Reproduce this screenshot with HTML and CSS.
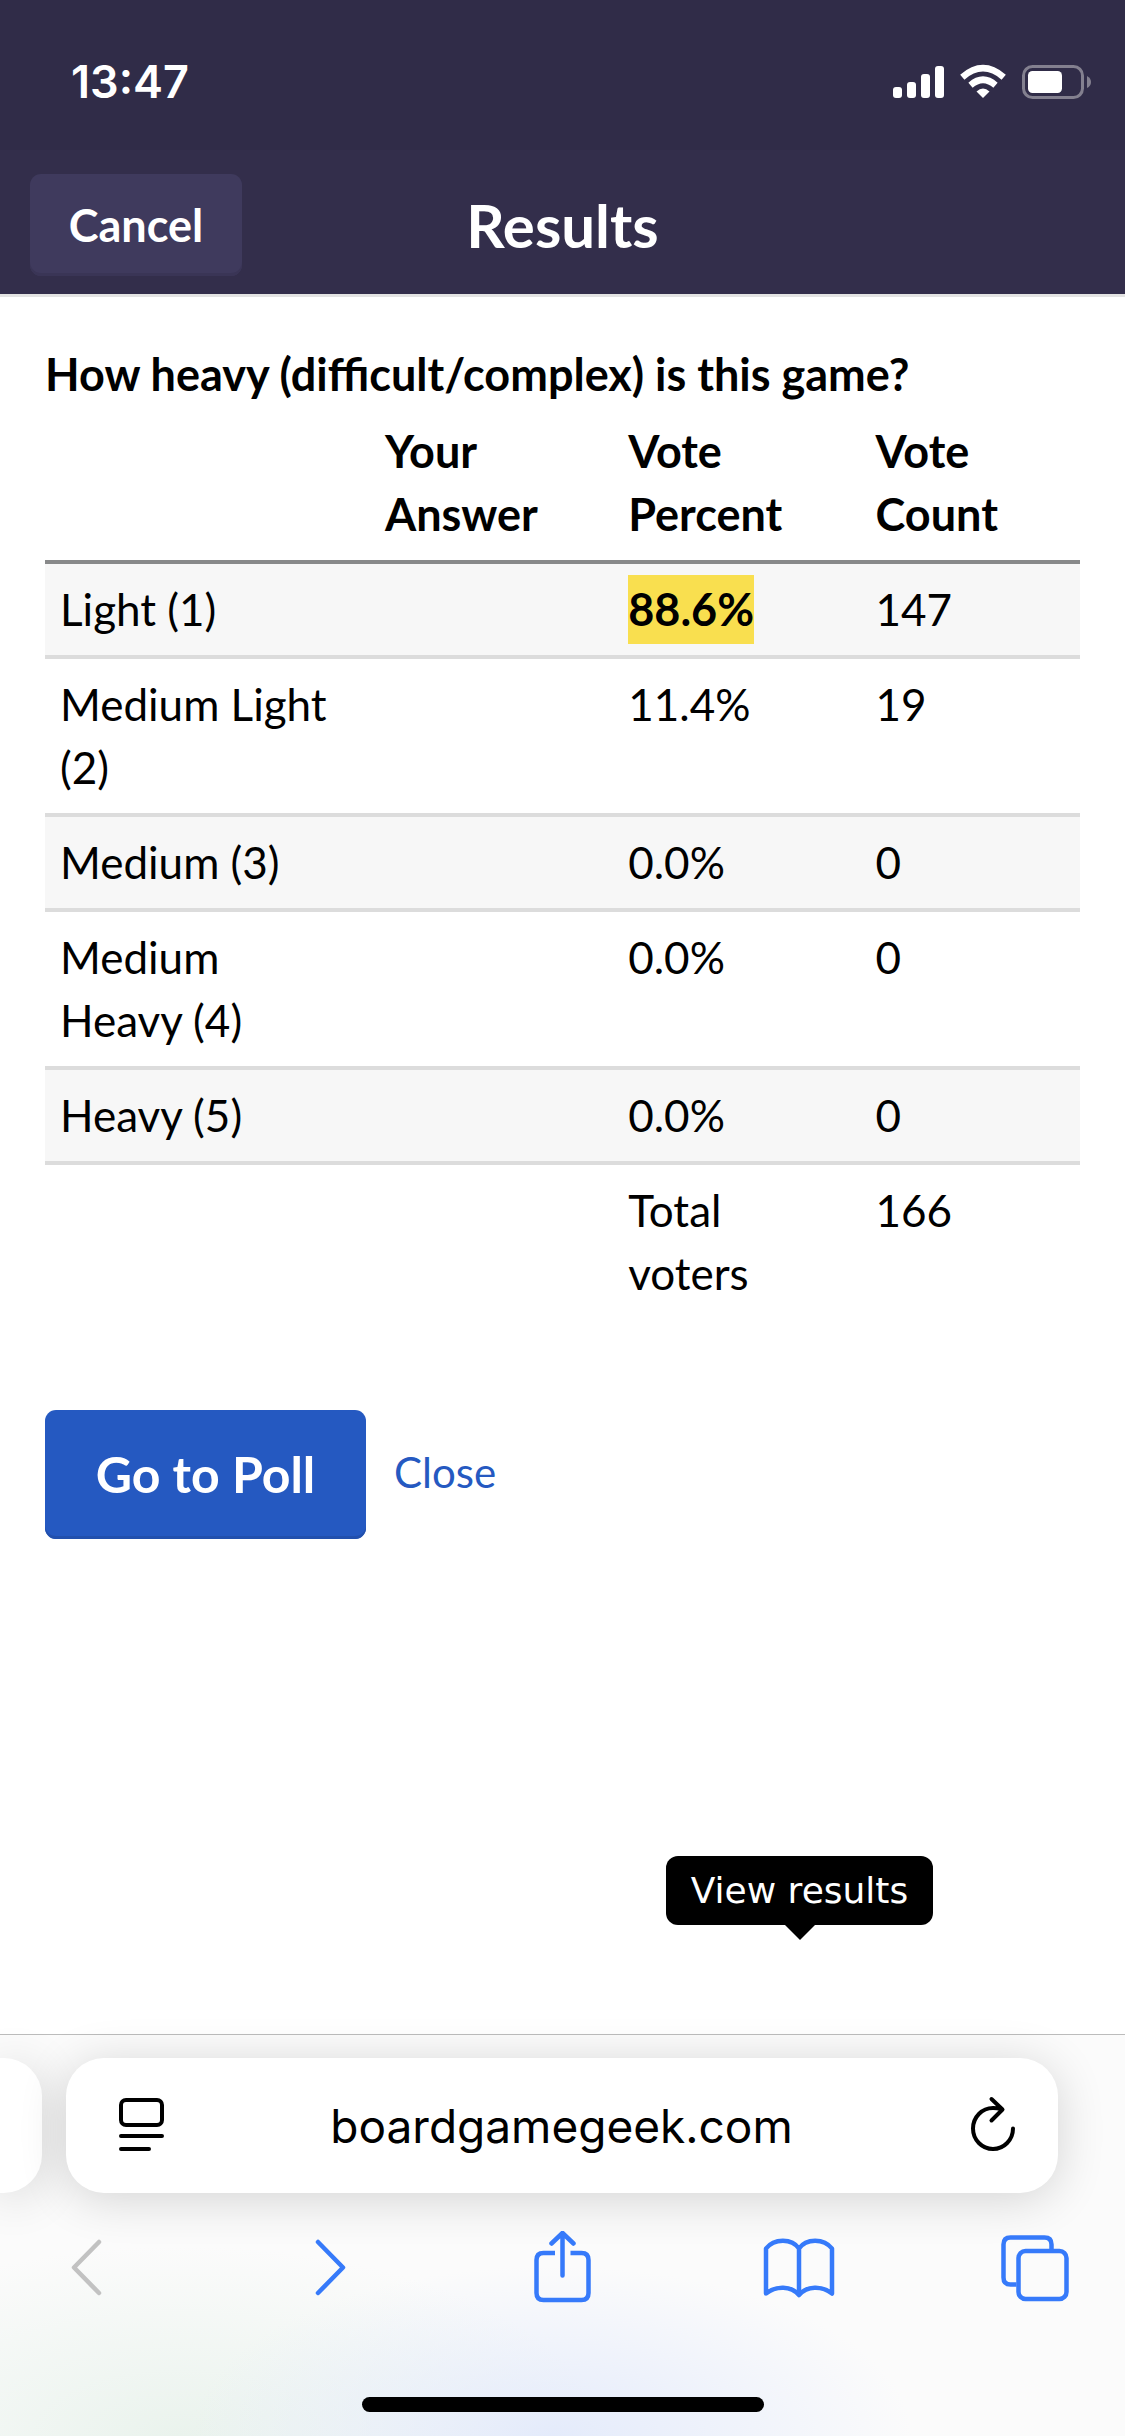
FILE: index.html
```html
<!DOCTYPE html>
<html lang="en">
<head>
<meta charset="utf-8">
<meta name="viewport" content="width=device-width, initial-scale=1">
<title>Results</title>
<link rel="stylesheet" href="styles.css">
</head>
<body>
<div class="status-bar">
  <span class="status-time">13:47</span>
  <svg class="status-icons" viewBox="0 0 200 36" aria-hidden="true">
    <g fill="#fff">
      <rect x="1" y="23" width="9" height="11" rx="3"/>
      <rect x="15" y="18" width="9" height="16" rx="3"/>
      <rect x="29" y="10" width="9" height="24" rx="3"/>
      <rect x="43" y="2" width="9" height="32" rx="3"/>
      <path d="M91 34L84.500 27.500Q91 21.500 97.500 27.500Z"/>
    </g>
    <g fill="none" stroke="#fff" stroke-width="6.500">
      <path d="M78.500 21.200Q91 10.300 103.500 21.200"/>
      <path d="M70.300 13.200Q91 -4.800 111.700 13.200"/>
    </g>
    <rect x="131.500" y="2.500" width="59" height="31" rx="9" fill="none" stroke="#83808f" stroke-width="3"/>
    <rect x="136" y="7" width="34" height="22" rx="4.500" fill="#fff"/>
    <path d="M195 12Q199 14 199 18T195 24Z" fill="#83808f"/>
  </svg>
</div>
<header class="header">
  <button class="cancel" type="button">Cancel</button>
  <h1 class="title">Results</h1>
</header>
<main class="content">
  <table class="results">
    <caption class="question">How heavy (difficult/complex) is this game?</caption>
    <colgroup><col class="col-option"><col class="col-answer"><col class="col-percent"><col class="col-count"></colgroup>
    <thead>
      <tr><td></td><th scope="col">Your<br>Answer</th><th scope="col">Vote<br>Percent</th><th scope="col">Vote<br>Count</th></tr>
    </thead>
    <tbody>
      <tr><td>Light (1)</td><td></td><td><mark class="leader">88.6%</mark></td><td>147</td></tr>
      <tr><td>Medium Light<br>(2)</td><td></td><td>11.4%</td><td>19</td></tr>
      <tr><td>Medium (3)</td><td></td><td>0.0%</td><td>0</td></tr>
      <tr><td>Medium<br>Heavy (4)</td><td></td><td>0.0%</td><td>0</td></tr>
      <tr><td>Heavy (5)</td><td></td><td>0.0%</td><td>0</td></tr>
    </tbody>
    <tfoot>
      <tr><td></td><td></td><td>Total<br>voters</td><td>166</td></tr>
    </tfoot>
  </table>
  <div class="actions">
    <button class="primary" type="button">Go to Poll</button>
    <a class="close" href="#">Close</a>
  </div>
  <div class="tooltip" role="tooltip">View results</div>
</main>
<footer class="browser">
  <div class="tabs">
    <div class="tab-previous"></div>
    <div class="tab">
      <button class="tab-button" type="button" aria-label="Page menu">
        <svg viewBox="0 0 54 60" fill="none" stroke="#000" stroke-width="4" stroke-linecap="round">
          <rect x="6" y="4" width="41" height="25" rx="5"/><path d="M6 40H47M6 53H34"/>
        </svg>
      </button>
      <input class="address" type="text" value="boardgamegeek.com" aria-label="Address">
      <button class="tab-button" type="button" aria-label="Reload">
        <svg viewBox="0 0 54 60" fill="none" stroke="#000" stroke-width="4" stroke-linecap="round" stroke-linejoin="round">
          <path d="M35 13C32 12.200 29 12 27 12A20 20.500 0 1 0 47 32.500M25.500 3L36.500 13.500L25.500 24.500"/>
        </svg>
      </button>
    </div>
  </div>
  <nav class="toolbar" aria-label="Browser">
    <button class="tool tool-disabled" type="button" aria-label="Back" disabled>
      <svg viewBox="0 0 72 72"><path d="M48 11L23 36.500L48 62"/></svg>
    </button>
    <button class="tool" type="button" aria-label="Forward">
      <svg viewBox="0 0 72 72"><path d="M30 11L55 36.500L30 62"/></svg>
    </button>
    <button class="tool" type="button" aria-label="Share">
      <svg viewBox="0 0 72 72"><path stroke-linecap="butt" d="M29 22H17.500Q10.500 22 10.500 29V62Q10.500 69 17.500 69H55.500Q62.500 69 62.500 62V29Q62.500 22 55.500 22H44.500"/><path d="M36.500 44.500V2M25.500 12.500L36.500 2L47.500 12.500"/></svg>
    </button>
    <button class="tool" type="button" aria-label="Bookmarks">
      <svg viewBox="0 0 72 72"><path d="M36 17.500C29 7 11 7 3 17.500V62.500C13 54.500 28 54.500 36 64C44 54.500 59 54.500 69 62.500V17.500C61 7 43 7 36 17.500ZM36 17.500V63"/></svg>
    </button>
    <button class="tool" type="button" aria-label="Tabs">
      <svg viewBox="0 0 72 72"><rect x="18.500" y="20" width="48" height="48" rx="7"/><path stroke-linecap="butt" d="M16.500 53.500H10.500Q3.500 53.500 3.500 46.500V13.500Q3.500 6.500 10.500 6.500H44.500Q51.500 6.500 51.500 13.500V18"/></svg>
    </button>
  </nav>
  <div class="home-indicator"></div>
</footer>
</body>
</html>
```
FILE: styles.css
```css
* {
  box-sizing: border-box;
}

body {
  display: flex;
  flex-direction: column;
  min-height: 100vh;
  margin: 0;
  background: #fff;
  color: #000;
  font: 44px/63px Lato, "Open Sans", sans-serif;
}

button,
input {
  margin: 0;
  padding: 0;
  border: 0;
  background: none;
  color: inherit;
  font: inherit;
}

svg {
  display: block;
}

.status-bar {
  display: flex;
  justify-content: space-between;
  align-items: center;
  height: 150px;
  padding: 14px 33px 0 71px;
  background: #302c48;
  color: #fff;
}

.status-time {
  font: 600 45px/60px Inter, sans-serif;
}

.status-icons {
  width: 200px;
  height: 36px;
}

.header {
  display: grid;
  grid-template-columns: 1fr auto 1fr;
  align-items: center;
  height: 147px;
  padding: 6px 30px 0;
  border-bottom: 3px solid #e3e3e3;
  background: #332e4b;
  color: #fff;
}

.cancel {
  justify-self: start;
  width: 212px;
  height: 102px;
  border-radius: 11px;
  background: #3f3a5d;
  box-shadow: inset 0 -3px #3a3556;
  font-size: 45px;
  font-weight: 700;
}

.title {
  margin: 0;
  font-size: 60px;
  font-weight: 700;
}

.content {
  position: relative;
  flex: 1;
  padding: 46px 45px 45px;
}

.results {
  width: 100%;
  table-layout: fixed;
  border-collapse: separate;
  border-spacing: 0;
}

.question {
  font-size: 45px;
  font-weight: 700;
  text-align: left;
}

.col-option {
  width: 31.4%;
}

.col-answer {
  width: 23.5%;
}

.col-percent {
  width: 23.9%;
}

.results th,
.results td {
  padding: 14px 15px;
  text-align: left;
  vertical-align: top;
}

.results th {
  font-size: 45px;
}

.results thead th,
.results thead td {
  border-bottom: 4px solid #88898a;
}

.results tbody td {
  border-bottom: 4px solid #dcdcdc;
}

.results tbody tr:nth-child(odd) {
  background: #f7f7f7;
}

.leader {
  display: inline-block;
  margin: -3px 0;
  padding: 3px 0;
  background: #f9df4f;
  font-size: 45px;
  font-weight: 700;
}

.actions {
  display: flex;
  align-items: center;
  gap: 28px;
  margin-top: 91px;
}

.primary {
  width: 321px;
  height: 129px;
  border-radius: 11px;
  background: #2559c1;
  box-shadow: inset 0 -3px #2250ad;
  color: #fff;
  font-size: 50px;
  font-weight: 700;
}

.close {
  padding-bottom: 4px;
  color: #2559c1;
  font-size: 42px;
  text-decoration: none;
}

.tooltip {
  position: absolute;
  right: 192px;
  bottom: 109px;
  width: 267px;
  border-radius: 12px;
  background: #000;
  color: #fff;
  font: 36px/69px "DejaVu Sans", sans-serif;
  text-align: center;
  white-space: nowrap;
}

.tooltip::after {
  content: "";
  position: absolute;
  top: 100%;
  left: 50%;
  margin-left: -15px;
  border: 15px solid transparent;
  border-top-color: #000;
  border-bottom: 0;
}

.browser {
  border-top: 1px solid #bcbcbc;
  background:
    radial-gradient(ellipse 360px 170px at 49% 100%, #e4ebfb, transparent),
    radial-gradient(ellipse 420px 190px at 16% 100%, #eaf3ed, transparent),
    #fbfbfb;
}

.tabs {
  display: flex;
  gap: 24px;
  padding: 23px 67px 0 0;
}

.tab,
.tab-previous {
  height: 135px;
  background: #fff;
  box-shadow: 0 6px 48px rgba(0, 0, 0, 0.16);
}

.tab-previous {
  width: 42px;
  border-radius: 0 38px 38px 0;
}

.tab {
  display: flex;
  flex: 1;
  align-items: center;
  padding: 0 38px 0 49px;
  border-radius: 38px;
}

.tab-button {
  width: 54px;
  height: 60px;
}

.address {
  flex: 1;
  min-width: 0;
  padding-right: 12px;
  font: 46px/60px Inter, sans-serif;
  text-align: center;
}

.toolbar {
  display: flex;
  justify-content: space-between;
  padding: 38px 53px 0 51px;
}

.tool {
  width: 72px;
  height: 72px;
}

.tool svg {
  fill: none;
  stroke: #367afa;
  stroke-width: 4.5;
  stroke-linecap: round;
  stroke-linejoin: round;
}

.tool-disabled svg {
  stroke: #c2c2c2;
}

.home-indicator {
  width: 402px;
  height: 15px;
  margin: 94px auto 24px;
  border-radius: 8px;
  background: #000;
}
```
